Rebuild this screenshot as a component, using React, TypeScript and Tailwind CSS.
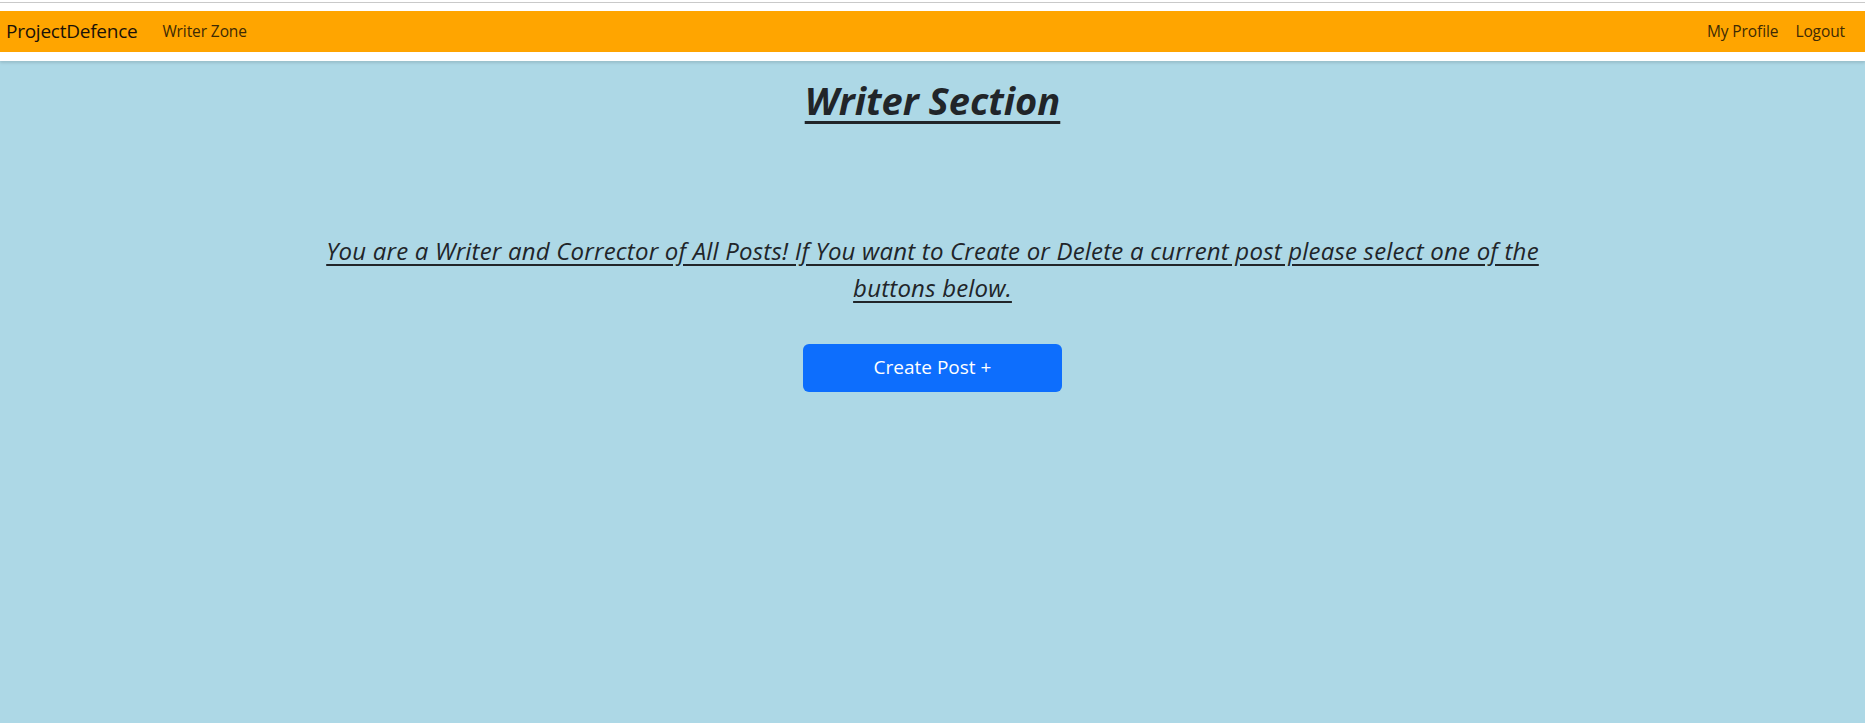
import React from "react";

export default function App() {
  const font = { fontFamily: '"Open Sans", "Noto Sans", sans-serif' };
  return (
    <div className="min-h-[723px] bg-[#add8e6]" style={font}>
      <div className="bg-white">
        <div className="h-[2px] bg-white" />
        <div className="h-[1px] bg-[#c9c9c9]" />
        <div className="h-[8px] bg-white" />
        <nav className="flex h-[41px] items-center justify-between bg-[#ffa500] pl-[6px] pr-[20px]">
          <div className="flex items-center">
            <a className="text-[19px] leading-none text-[#1a1208] tracking-[-0.25px]">ProjectDefence</a>
            <a className="ml-[25px] text-[15.5px] leading-none text-[#3d2a05] tracking-[-0.1px]">Writer Zone</a>
          </div>
          <div className="flex items-center gap-[17px]">
            <a className="text-[15.5px] leading-none text-[#3d2a05] tracking-[-0.1px]">My Profile</a>
            <a className="text-[15.5px] leading-none text-[#3d2a05] tracking-[-0.1px]">Logout</a>
          </div>
        </nav>
        <div className="h-[9px] bg-white shadow-[0_2px_3px_rgba(0,0,0,0.12)]" />
      </div>
      <main className="mx-auto flex max-w-[1320px] flex-col items-center px-[12px] text-[#212529]">
        <h2 className="mt-[17px] text-[38px] font-bold italic leading-[1.2] underline decoration-[3px] underline-offset-[6px]">
          Writer Section
        </h2>
        <p className="mt-[108px] max-w-[1270px] text-center text-[24px] italic leading-[37px] tracking-[0.2px] underline underline-offset-[4px]">
          You are a Writer and Corrector of All Posts! If You want to Create or Delete a current post please select one of the buttons below.
        </p>
        <button className="mt-[38px] h-[48px] w-[259px] rounded-[6px] bg-[#0d6efd] text-[19px] text-white">
          Create Post +
        </button>
      </main>
    </div>
  );
}
